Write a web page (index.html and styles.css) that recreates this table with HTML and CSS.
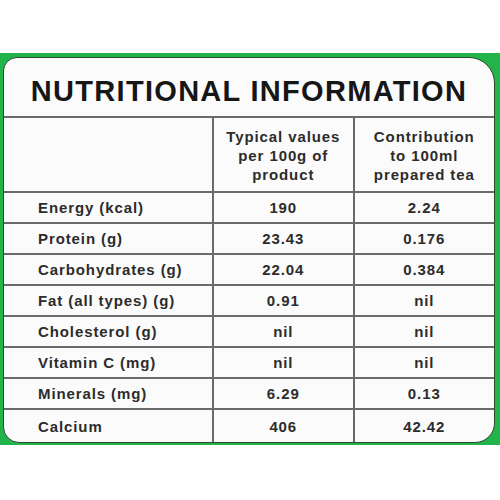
FILE: index.html
```html
<!DOCTYPE html>
<html>
<head>
	<title>Nutritional Information</title>
	<meta charset="utf-8">
	<link rel="stylesheet" href="styles.css">
</head>
<body>

	<div class="band">
		<div class="card">
			<h1 class="title">NUTRITIONAL INFORMATION</h1>

			<table class="facts">
				<tr class="head">
					<th></th>
					<th>Typical values<br>per 100g of<br>product</th>
					<th>Contribution<br>to 100ml<br>prepared tea</th>
				</tr>
				<tr>
					<td class="name">Energy (kcal)</td>
					<td>190</td>
					<td>2.24</td>
				</tr>
				<tr>
					<td class="name">Protein (g)</td>
					<td>23.43</td>
					<td>0.176</td>
				</tr>
				<tr>
					<td class="name">Carbohydrates (g)</td>
					<td>22.04</td>
					<td>0.384</td>
				</tr>
				<tr>
					<td class="name">Fat (all types) (g)</td>
					<td>0.91</td>
					<td>nil</td>
				</tr>
				<tr>
					<td class="name">Cholesterol (g)</td>
					<td>nil</td>
					<td>nil</td>
				</tr>
				<tr>
					<td class="name">Vitamin C (mg)</td>
					<td>nil</td>
					<td>nil</td>
				</tr>
				<tr>
					<td class="name">Minerals (mg)</td>
					<td>6.29</td>
					<td>0.13</td>
				</tr>
				<tr class="last">
					<td class="name">Calcium</td>
					<td>406</td>
					<td>42.42</td>
				</tr>
			</table>
		</div>
	</div>

</body>
</html>
```

FILE: styles.css
```css
body {
	margin: 0;
	background: #fff;
	font-family: "Liberation Sans", Arial, sans-serif;
}

/* green packaging behind the label */
.band {
	margin-top: 53px;
	height: 392px;
	padding: 4px 5px 2px 3px;
	box-sizing: border-box;
	background: #22b34a;
}

.card {
	height: 100%;
	background: #fbfbfb;
	border: 1px solid #2a4a30;
	border-radius: 14px 26px 20px 16px;
	box-sizing: border-box;
	overflow: hidden;
}

.title {
	margin: 0;
	height: 58px;
	line-height: 67px;
	text-align: center;
	font-size: 29px;
	letter-spacing: 1.3px;
	color: #161616;
}

.facts {
	width: 100%;
	border-collapse: collapse;
	table-layout: fixed;
	color: #2c2c2c;
	font-weight: bold;
	font-size: 15px;
	letter-spacing: 0.9px;
}

.facts th,
.facts td {
	border: 2px solid #6a6a6a;
	padding: 0;
	text-align: center;
	height: 29px;
}

.facts th:first-child,
.facts td:first-child {
	border-left: none;
	width: 208px;
}

.facts th:last-child,
.facts td:last-child {
	border-right: none;
}

.facts .head th {
	height: 72px;
	line-height: 19px;
	font-weight: bold;
	padding-top: 1px;
}

.facts .name {
	text-align: left;
	padding-left: 34px;
}

.facts .last td {
	border-bottom: none;
	height: 33px;
}
```
